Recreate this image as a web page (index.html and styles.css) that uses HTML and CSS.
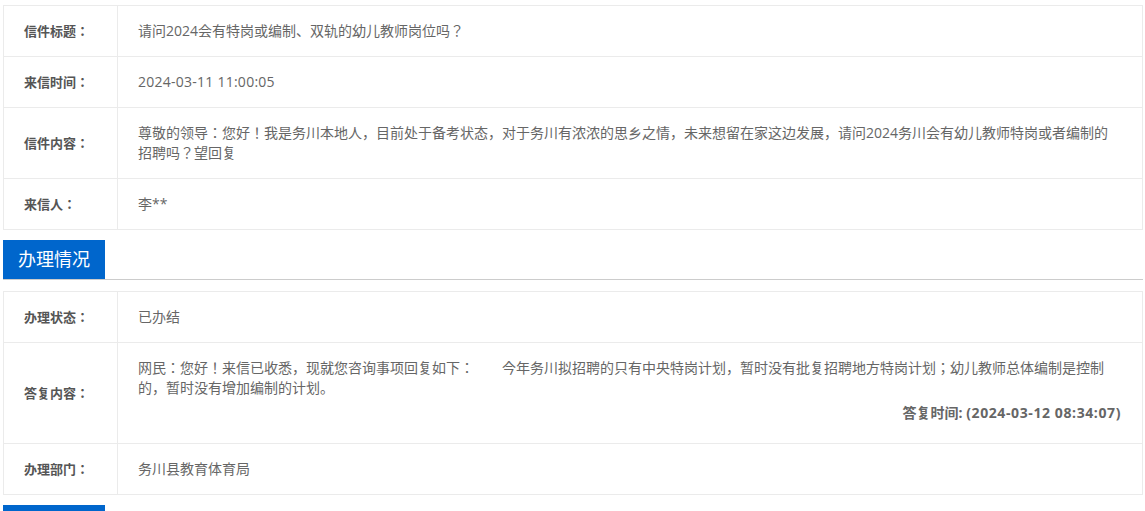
FILE: index.html
```html
<!DOCTYPE html>
<html lang="zh-CN">
<head>
    <meta charset="UTF-8">
    <title>信件详情</title>
    <link rel="stylesheet" href="styles.css">
</head>
<body>
    <div class="page">
        <table class="info-table">
            <tr>
                <th>信件标题：</th>
                <td>请问2024会有特岗或编制、双轨的幼儿教师岗位吗？</td>
            </tr>
            <tr>
                <th>来信时间：</th>
                <td><span class="num">2024-03-11 11:00:05</span></td>
            </tr>
            <tr>
                <th>信件内容：</th>
                <td>尊敬的领导：您好！我是务川本地人，目前处于备考状态，对于务川有浓浓的思乡之情，未来想留在家这边发展，请问2024务川会有幼儿教师特岗或者编制的招聘吗？望回复</td>
            </tr>
            <tr>
                <th>来信人：</th>
                <td>李**</td>
            </tr>
        </table>

        <div class="section-title">
            <span>办理情况</span>
        </div>

        <table class="info-table">
            <tr>
                <th>办理状态：</th>
                <td>已办结</td>
            </tr>
            <tr>
                <th>答复内容：</th>
                <td>
                    <div>网民：您好！来信已收悉，现就您咨询事项回复如下：&emsp;&emsp;今年务川拟招聘的只有中央特岗计划，暂时没有批复招聘地方特岗计划；幼儿教师总体编制是控制的，暂时没有增加编制的计划。</div>
                    <div class="reply-time">答复时间: <span class="num-bold">(2024-03-12 08:34:07)</span></div>
                </td>
            </tr>
            <tr>
                <th>办理部门：</th>
                <td>务川县教育体育局</td>
            </tr>
        </table>

        <div class="section-title">
            <span>&nbsp;</span>
        </div>
    </div>
</body>
</html>
```

FILE: styles.css
```css
* {
    margin: 0;
    padding: 0;
    box-sizing: border-box;
}

body {
    background-color: #fff;
    font-family: "Open Sans", "Noto Sans CJK JP", "Noto Sans CJK SC", sans-serif;
    /* keep the centred full-width punctuation */
    font-feature-settings: "locl" 0;
    color: #666;
}

.page {
    width: 1140px;
    padding-top: 5px;
    margin-left: 3px;
}

.info-table {
    width: 100%;
    border-collapse: collapse;
    table-layout: fixed;
}

.info-table th,
.info-table td {
    border: 1px solid #ebebeb;
    padding: 15px 22px 15px 20px;
    line-height: 20px;
    vertical-align: middle;
    text-align: left;
}

.info-table th {
    width: 114px;
    font-size: 13px;
    font-weight: bold;
    color: #555;
}

.info-table td {
    font-size: 14px;
    color: #666;
}

.num {
    letter-spacing: 0.25px;
}

.reply-time {
    text-align: right;
    font-weight: bold;
    line-height: 30px;
    margin-right: -1px;
}

.num-bold {
    letter-spacing: 0.6px;
}

.section-title {
    margin: 10px 0 11px;
    border-bottom: 1px solid #ccc;
    height: 40px;
}

.section-title span {
    display: inline-block;
    width: 102px;
    height: 39px;
    line-height: 39px;
    background-color: #0066cc;
    color: #fff;
    font-size: 18px;
    padding-left: 15px;
}
```
